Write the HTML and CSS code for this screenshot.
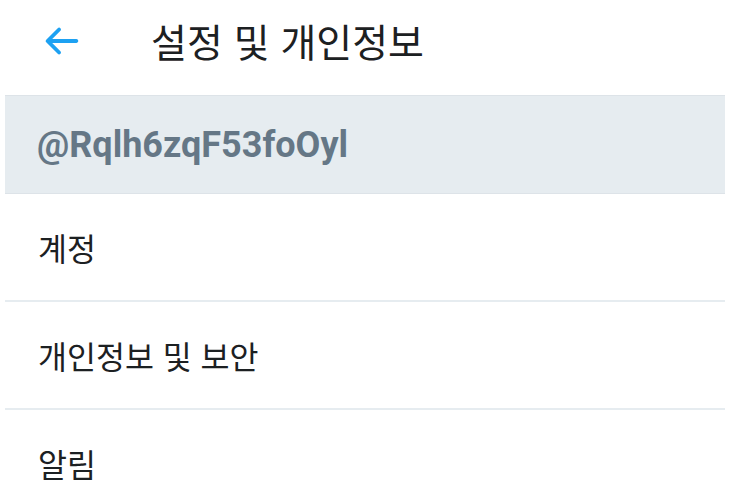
FILE: index.html
```html
<!DOCTYPE html>
<html lang="ko">
<head>
    <meta charset="UTF-8">
    <meta name="viewport" content="width=device-width, initial-scale=1.0">
    <title>설정 및 개인정보</title>
    <link rel="stylesheet" href="styles.css">
</head>
<body>
    <div class="page">
        <header class="top-bar">
            <a href="#" class="back">
                <svg viewBox="0 0 24 24" width="46" height="46">
                    <path d="M20 11H7.414l4.293-4.293c.39-.39.39-1.023 0-1.414s-1.023-.39-1.414 0l-6 6c-.39.39-.39 1.023 0 1.414l6 6c.195.195.45.293.707.293s.512-.098.707-.293c.39-.39.39-1.023 0-1.414L7.414 13H20c.553 0 1-.447 1-1s-.447-1-1-1z"/>
                </svg>
            </a>
            <h1>설정 및 개인정보</h1>
        </header>

        <div class="account-name">@Rqlh6zqF53foOyl</div>

        <ul class="menu">
            <li><a href="#">계정</a></li>
            <li><a href="#">개인정보 및 보안</a></li>
            <li><a href="#">알림</a></li>
        </ul>
    </div>
</body>
</html>
```

FILE: styles.css
```css
body, html {
    margin: 0;
    padding: 0;
    background-color: #fff;
    font-family: 'Noto Sans CJK KR', 'Noto Sans', sans-serif;
    color: #14171a;
}

.page {
    padding: 0 4px 0 5px;
}

/* 상단 바 */
.top-bar {
    box-sizing: border-box;
    height: 95px;
    padding-bottom: 14px;
    display: flex;
    align-items: center;
}

.back {
    display: flex;
    margin-left: 33px;
}

.back svg {
    fill: #1da1f2;
}

.top-bar h1 {
    margin: 0 0 0 67px;
    font-size: 39px;
    font-weight: 400;
    line-height: 1;
    color: #1c2022;
}

/* 사용자 이름 */
.account-name {
    height: 97px;
    display: flex;
    align-items: center;
    padding-left: 32px;
    background-color: #e6ecf0;
    border-top: 1px solid #dde3e8;
    border-bottom: 1px solid #dde3e8;
    font-family: Roboto, 'Noto Sans', sans-serif;
    font-weight: 700;
    font-size: 36px;
    color: #657786;
}

/* 메뉴 목록 */
.menu {
    list-style: none;
    margin: 0;
    padding: 0;
}

.menu li {
    border-bottom: 2px solid #e6ecf0;
}

.menu li a {
    display: flex;
    align-items: center;
    height: 106px;
    padding-left: 33px;
    font-size: 31.5px;
    color: #1c2022;
    text-decoration: none;
}
```
